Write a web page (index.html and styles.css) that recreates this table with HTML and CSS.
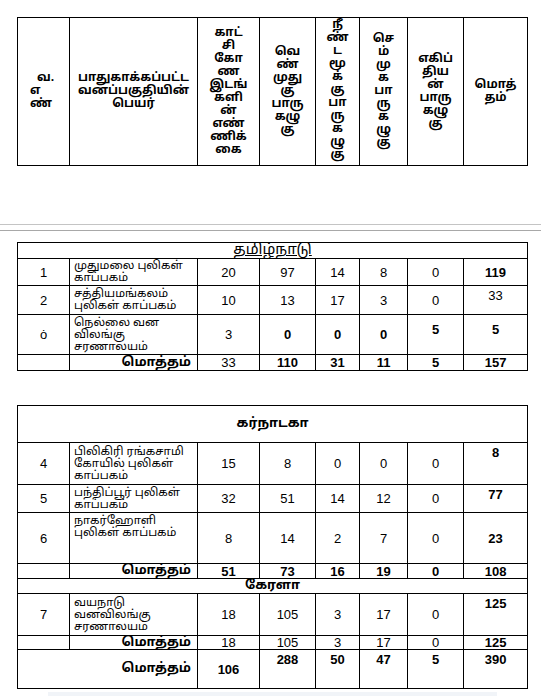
FILE: index.html
```html
<!DOCTYPE html>
<html lang="ta">
<head>
<meta charset="utf-8">
<title>புலிகள் காப்பகம் - கழுகு கணக்கெடுப்பு</title>
<link rel="stylesheet" href="styles.css">
</head>
<body>
<div class="page">
  <table class="t head">
    <colgroup>
      <col class="c1"><col class="c2"><col class="c3"><col class="c4"><col class="c5"><col class="c6"><col class="c7"><col class="c8">
    </colgroup>
    <tr>
      <th class="h-sn"><span class="ind">வ.</span><br>எ<br>ண்</th>
      <th>பாதுகாக்கப்பட்ட<br>வனப்பகுதியின்<br>பெயர்</th>
      <th>காட்<br>சி<br>கோ<br>ண<br>இடங்<br>களி<br>ன்<br>எண்<br>ணிக்<br>கை</th>
      <th>வெ<br>ண்<br>முது<br>கு<br>பாரு<br>கழு<br>கு</th>
      <th class="h-long">நீ<br>ண்<br>ட<br>மூ<br>க்<br>கு<br>பா<br>ரு<br>க<br>ழு<br>கு</th>
      <th>செ<br>ம்<br>மு<br>க<br>பா<br>ரு<br>க<br>ழு<br>கு</th>
      <th>எகிப்<br>திய<br>ன்<br>பாரு<br>கழு<br>கு</th>
      <th>மொத்<br>தம்</th>
    </tr>
  </table>

  <div class="sep"><div class="line1"></div><div class="line2"></div></div>

  <table class="t tn">
    <colgroup>
      <col class="c1"><col class="c2"><col class="c3"><col class="c4"><col class="c5"><col class="c6"><col class="c7"><col class="c8">
    </colgroup>
    <tr class="r16"><td colspan="8" class="state u"><span class="ln">தமிழ்நாடு</span></td></tr>
    <tr class="r27">
      <td>1</td><td class="name"><span class="ln">முதுமலை புலிகள்</span><span class="ln">காப்பகம்</span></td>
      <td>20</td><td>97</td><td>14</td><td>8</td><td>0</td><td class="b">119</td>
    </tr>
    <tr class="r29">
      <td>2</td><td class="name"><span class="ln">சத்தியமங்கலம்</span><span class="ln">புலிகள் காப்பகம்</span></td>
      <td>10</td><td>13</td><td>17</td><td>3</td><td>0</td><td class="top">33</td>
    </tr>
    <tr class="r40">
      <td>ȯ</td><td class="name"><span class="ln">நெல்லை வன</span><span class="ln">விலங்கு</span><span class="ln">சரணாலயம்</span></td>
      <td>3</td><td class="b">0</td><td class="b">0</td><td class="b">0</td><td class="b up">5</td><td class="b up">5</td>
    </tr>
    <tr class="r16">
      <td></td><td class="tot"><span class="ln">மொத்தம்</span></td>
      <td>33</td><td class="b">110</td><td class="b">31</td><td class="b">11</td><td class="b">5</td><td class="b">157</td>
    </tr>
  </table>

  <table class="t ka">
    <colgroup>
      <col class="c1"><col class="c2"><col class="c3"><col class="c4"><col class="c5"><col class="c6"><col class="c7"><col class="c8">
    </colgroup>
    <tr class="r37"><td colspan="8" class="state b"><span class="ln">கர்நாடகா</span></td></tr>
    <tr class="r42">
      <td>4</td><td class="name"><span class="ln">பிலிகிரி ரங்கசாமி</span><span class="ln">கோயில் புலிகள்</span><span class="ln">காப்பகம்</span></td>
      <td>15</td><td>8</td><td>0</td><td>0</td><td>0</td><td class="b top">8</td>
    </tr>
    <tr class="r28">
      <td>5</td><td class="name"><span class="ln">பந்திப்பூர் புலிகள்</span><span class="ln">காப்பகம்</span></td>
      <td>32</td><td>51</td><td>14</td><td>12</td><td>0</td><td class="b top">77</td>
    </tr>
    <tr class="r51">
      <td>6</td><td class="name vt"><span class="ln">நாகர்ஹோளி</span><span class="ln">புலிகள் காப்பகம்</span></td>
      <td>8</td><td>14</td><td>2</td><td>7</td><td>0</td><td class="b">23</td>
    </tr>
    <tr class="r15">
      <td></td><td class="tot"><span class="ln">மொத்தம்</span></td>
      <td class="b">51</td><td class="b">73</td><td class="b">16</td><td class="b">19</td><td class="b">0</td><td class="b">108</td>
    </tr>
    <tr class="r15"><td colspan="8" class="state b"><span class="ln">கேரளா</span></td></tr>
    <tr class="r42">
      <td>7</td><td class="name"><span class="ln">வயநாடு</span><span class="ln">வனவிலங்கு</span><span class="ln">சரணாலயம்</span></td>
      <td>18</td><td>105</td><td>3</td><td>17</td><td>0</td><td class="b top">125</td>
    </tr>
    <tr class="r14">
      <td></td><td class="tot"><span class="ln">மொத்தம்</span></td>
      <td>18</td><td>105</td><td>3</td><td>17</td><td>0</td><td class="b">125</td>
    </tr>
    <tr class="r39">
      <td colspan="2" class="tot"><span class="ln">மொத்தம்</span></td>
      <td class="b">106</td><td class="b top">288</td><td class="b top">50</td><td class="b top">47</td><td class="b top">5</td><td class="b top">390</td>
    </tr>
  </table>
  <div class="foot"></div>
</div>
</body>
</html>
```

FILE: styles.css
```css
html, body {
  margin: 0;
  padding: 0;
  background: #ffffff;
}
body {
  font-family: "Noto Sans Tamil", "Lohit Tamil", "Latha", "Liberation Sans", sans-serif;
  color: #000000;
  width: 541px;
  height: 696px;
  overflow: hidden;
}
.page {
  padding-top: 17px;
}
.t {
  border-collapse: collapse;
  table-layout: fixed;
  width: 511px;
  margin-left: 17px;
}
.t td, .t th {
  border: 1px solid #000;
  padding: 0 1px;
  text-align: center;
  vertical-align: middle;
  overflow: hidden;
}
col.c1 { width: 52px; }
col.c2 { width: 128px; }
col.c3 { width: 62px; }
col.c4 { width: 56px; }
col.c5 { width: 44px; }
col.c6 { width: 48px; }
col.c7 { width: 56px; }
col.c8 { width: 64px; }

.head th {
  height: 146px;
  font-size: 12px;
  line-height: 13px;
  font-weight: bold;
}
.head .h-sn {
  text-align: left;
  padding-left: 12px;
}
.head .ind { margin-left: 7px; }
.head .h-long {
  vertical-align: top;
  padding-top: 1px;
}

.sep {
  margin-top: 58px;
}
.line1 {
  height: 1px;
  background: #c4c4c4;
}
.line2 {
  height: 1px;
  margin-top: 5px;
  background: #a8a8a8;
}

.tn { margin-top: 11px; }
.ka { margin-top: 34px; }

.t td {
  font-family: "Liberation Sans", Arial, sans-serif;
  font-size: 13px;
  line-height: 13px;
}
.t td.name, .t td.tot, .t td.state {
  font-family: "Noto Sans Tamil", "Lohit Tamil", "Latha", "Liberation Sans", sans-serif;
  font-size: 11.5px;
}
.ln {
  display: block;
  height: 12px;
  line-height: 12px;
  white-space: nowrap;
  overflow: visible;
}
.t td.name {
  text-align: left;
  padding-left: 4px;
}
.t td.name.vt {
  vertical-align: top;
  padding-top: 2px;
}
.t td.tot {
  text-align: right;
  padding-right: 6px;
  font-weight: bold;
  font-size: 13px;
}
.t td.state {
  font-size: 13px;
}
.t td.state.u {
  font-size: 15px;
  text-decoration: underline;
}
.t td.state.u .ln {
  height: 13px;
  line-height: 13px;
}
.t td.b { font-weight: bold; }
.t td.top {
  vertical-align: top;
  padding-top: 3px;
}
.t td.up {
  vertical-align: top;
  padding-top: 8px;
}

tr.r14 { height: 14px; }
tr.r15 { height: 15px; }
tr.r16 { height: 16px; }
tr.r27 { height: 27px; }
tr.r28 { height: 28px; }
tr.r29 { height: 29px; }
tr.r37 { height: 37px; }
tr.r39 { height: 39px; }
tr.r40 { height: 40px; }
tr.r42 { height: 42px; }
tr.r51 { height: 51px; }

.foot {
  margin-top: 3px;
  margin-left: 48px;
  width: 449px;
  height: 6px;
  background: #f1f4f8;
}
```
